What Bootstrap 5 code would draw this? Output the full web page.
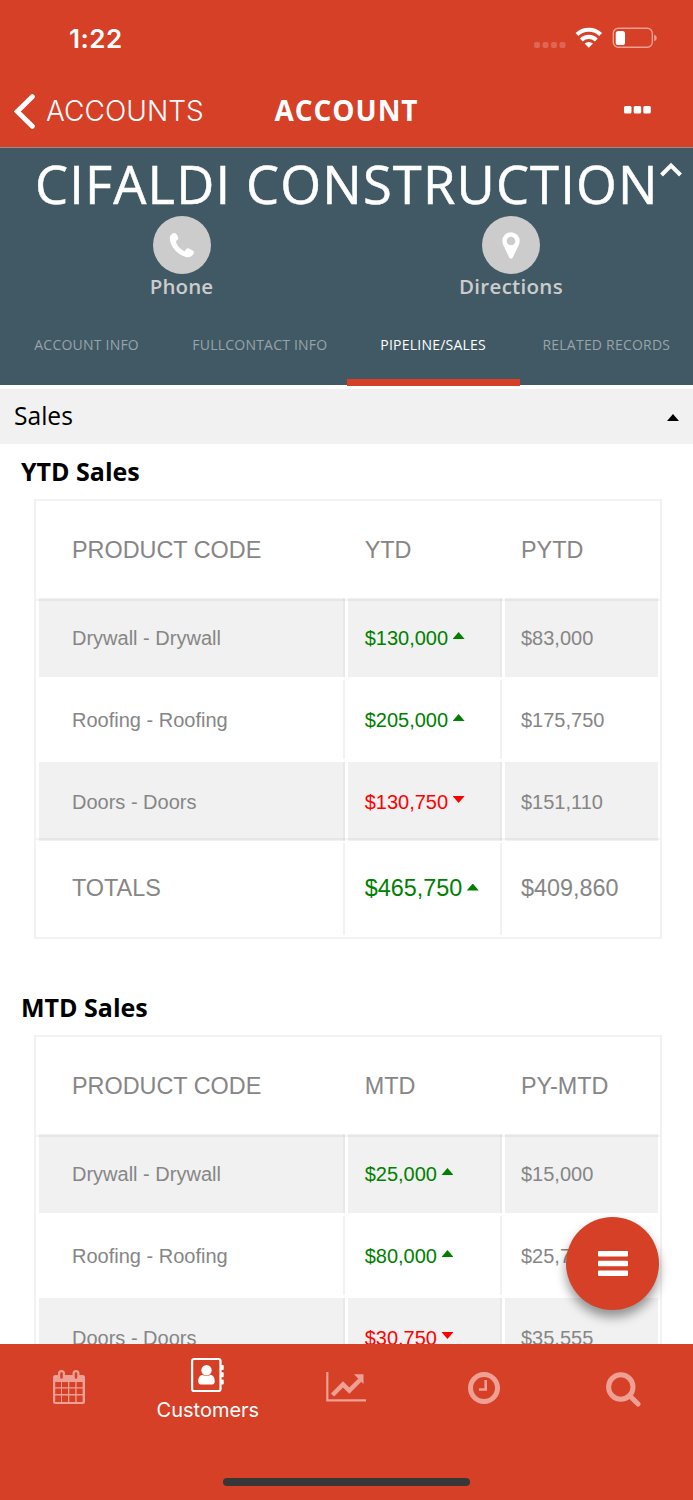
<!DOCTYPE html>
<html lang="en">
<head>
<meta charset="utf-8">
<meta name="viewport" content="width=device-width, initial-scale=1">
<title>Account</title>
<link href="https://cdn.jsdelivr.net/npm/bootstrap@5.3.0/dist/css/bootstrap.min.css" rel="stylesheet">
<style>
:root { --brand: #d64027; --slate: #415964; }
html, body { height: 1500px; overflow: hidden; }
body { font-family: "Open Sans", "Noto Sans", sans-serif; color: #000; background: #fff; line-height: 1; white-space: nowrap; }
svg { display: block; flex: none; }
.phone { height: 1500px; }
.topbar { background: var(--brand); height: 148px; border-bottom: 1px solid #a08a85; }
.status { height: 76px; padding: 0 36px 0 69px; }
.clock { font: 600 26px/30px Inter, sans-serif; letter-spacing: .5px; padding-top: 1px; }
.titlebar { height: 71px; display: grid; grid-template-columns: 252px 189px 252px; align-items: center; padding-bottom: 1px; }
.back { font: 300 28px/32px Inter, sans-serif; letter-spacing: .05px; padding-left: 14px; gap: 11px; }
.page-title { font-size: 28px; font-weight: 700; letter-spacing: .95px; padding-bottom: 3px; }
.hero { background: var(--slate); height: 237px; }
.company { font-size: 52.5px; line-height: 60px; padding: 6px 0 0 35px; height: 68px; letter-spacing: 1.15px; -webkit-text-stroke: .5px #fff; }
.caret-up { margin: 8px 0 0 1px; }
.quick { grid-template-columns: 363px 330px; }
.quick > div:last-child { padding-right: 34px; }
.round { width: 58px; height: 58px; background: #ccc; }
.quick-label { color: #ccc; font-size: 20.5px; font-weight: 600; line-height: 24px; letter-spacing: .1px; }
.quick > div:last-child .quick-label { letter-spacing: .3px; }
.tabs { height: 80px; }
.tabs a { width: 25%; color: #97a4aa; font-size: 14px; letter-spacing: .22px; padding-top: 4px; text-decoration: none; border-bottom: 7px solid transparent; }
.tabs a.current { color: #fff; border-color: var(--brand); }
.section-bar { margin-top: 4px; height: 55px; background: #f1f1f1; padding: 0 14px; font-size: 24.600px; }
.section-bar .tri { margin-top: 2px; }
.block-title { font-size: 25px; font-weight: 700; line-height: 30px; padding-left: 21px; height: 55px; padding-top: 12px; }
.sheet { margin: 0 31px 41px 34px; height: 440px; border: 2px solid #f2f2f2; font-family: "Liberation Sans", Arial, sans-serif; color: #868686; }
.sheet-row { display: grid; grid-template-columns: 306px 154px 153px; column-gap: 3px; padding-left: 3px; }
.sheet-row > div { display: flex; align-items: center; padding-left: 16px; border-right: 2px solid rgba(0,0,0,.05); }
.sheet-row > div:nth-child(2) { padding-left: 16.700px; }
.sheet-row > div:first-child { padding-left: 33px; }
.sheet-row > div:last-child { border-right: 0; }
.head-row { height: 100px; border-bottom: 2px solid rgba(0,0,0,.045); font-size: 23.4px; }
.sheet-row.head-row > div { border: 0; padding-top: 2px; }
.rows { display: grid; row-gap: 3px; margin-top: -3px; grid-auto-rows: 79px; font-size: 20px; }
.rows .sheet-row:nth-child(odd) > div { background: rgba(0,0,0,.055); background-clip: padding-box; border-color: rgba(0,0,0,.09); }
.total-row { margin-top: -3px; height: 99px; padding-top: 3px; padding-bottom: 2px; border-top: 2px solid rgba(0,0,0,.045); font-size: 23.4px; }
.gain { color: #008000; }
.loss { color: #f00; }
.tri { width: 12px; height: 7px; margin: -4px 0 0 4.500px; background: currentColor; clip-path: polygon(50% 0, 100% 100%, 0 100%); }
.loss .tri { clip-path: polygon(0 0, 100% 0, 50% 100%); }
.fab { left: 566px; top: 1217px; width: 93px; height: 93px; background: var(--brand); box-shadow: 0 7px 11px rgba(0,0,0,.4); }
.tabbar { background: var(--brand); height: 156px; }
.dock { height: 90px; display: grid; grid-template-columns: repeat(5, 138.6px); justify-items: center; }
.dock a { color: #eea095; text-decoration: none; }
.dock a.current { color: #fff; font: 400 20px/24px Inter, sans-serif; letter-spacing: 0; }
.home { width: 247px; height: 8px; background: #373737; margin-top: 44px; }
</style>
</head>
<body>
<div class="phone d-flex flex-column position-relative">
  <header class="topbar text-white flex-shrink-0">
    <div class="status d-flex align-items-center justify-content-between">
      <span class="clock">1:22</span>
      <svg width="124" height="26" viewBox="533 25 124 26" fill="#fff">
        <g opacity=".2"><rect x="534" y="42" width="6" height="6" rx="2"/><rect x="542.500" y="42" width="6" height="6" rx="2"/><rect x="551" y="42" width="6" height="6" rx="2"/><rect x="559.500" y="42" width="6" height="6" rx="2"/></g>
        <g fill="none" stroke="#fff" stroke-width="4.200"><path d="M577 34.500a17 17 0 0 1 23.600 0"/><path d="M581.300 39.900a10.800 10.800 0 0 1 15 0"/></g>
        <path d="M588.800 47.800l-4.200-4.200a6 6 0 0 1 8.400 0z"/>
        <g opacity=".5"><rect x="613.300" y="28.300" width="39" height="19" rx="5" fill="none" stroke="#fff" stroke-width="1.400"/><path d="M654.200 34.500q2.600 1.200 2.600 3.400t-2.600 3.400z"/></g>
        <rect x="615.700" y="31" width="9.300" height="14" rx="2.600"/>
      </svg>
    </div>
    <div class="titlebar">
      <div class="back d-flex align-items-center">
        <svg width="21" height="35" viewBox="0 0 21 35" fill="none" stroke="#fff" stroke-width="4.900" stroke-linecap="round"><path d="M18.300 2.700L3.300 17.500l15 14.800"/></svg>
        <span>ACCOUNTS</span>
      </div>
      <div class="page-title text-center">ACCOUNT</div>
      <svg class="ms-auto" width="27" height="8" viewBox="0 0 27 8" fill="#fff" style="margin:-2px 42px 0 0"><rect width="7.500" height="7.500" rx="1.500"/><rect x="9.700" width="7.500" height="7.500" rx="1.500"/><rect x="19.300" width="7.500" height="7.500" rx="1.500"/></svg>
    </div>
  </header>

  <section class="hero flex-shrink-0">
    <div class="company text-white d-flex"><span>CIFALDI CONSTRUCTION</span>
      <svg class="caret-up" width="22" height="15" viewBox="0 0 22 15" fill="none" stroke="#fff" stroke-width="4"><path d="M1.500 13L11 3.500l9.500 9.500"/></svg>
    </div>
    <div class="quick d-grid">
      <div class="d-flex flex-column align-items-center">
        <div class="round rounded-circle d-flex align-items-center justify-content-center">
          <svg width="26" height="26" viewBox="0 0 26 26" fill="#fff"><path d="M3 1.700Q5 .3 6.500 1.300C8.300 3 9 5 9.400 6.500Q9 7.700 6.800 9.200C7.800 13.500 11.500 17.500 15.800 19.300Q17 17 18.200 16.300C20.500 16.600 22.500 17.500 24.300 19Q25.200 20 24.600 21.500C23 24.500 20.500 25.600 17 25C9 23 1.500 15 .8 7Q.7 3.500 3 1.700z"/></svg>
        </div>
        <div class="quick-label">Phone</div>
      </div>
      <div class="d-flex flex-column align-items-center">
        <div class="round rounded-circle d-flex align-items-center justify-content-center">
          <svg width="18" height="27" viewBox="0 0 18 27" fill="#fff"><path fill-rule="evenodd" d="M9 .3a8.700 8.700 0 0 1 8.700 8.700c0 1.500-.3 2.700-.9 3.900l-6 12.600a2 2 0 0 1-3.600 0L1.200 12.900C.6 11.700.3 10.500.3 9A8.700 8.700 0 0 1 9 .3zM9 4.700a4.300 4.300 0 1 0 0 8.600 4.300 4.300 0 0 0 0-8.600z"/></svg>
        </div>
        <div class="quick-label">Directions</div>
      </div>
    </div>
    <nav class="tabs d-flex mt-2">
      <a href="#" class="d-flex align-items-center justify-content-center">ACCOUNT INFO</a>
      <a href="#" class="d-flex align-items-center justify-content-center">FULLCONTACT INFO</a>
      <a href="#" class="current d-flex align-items-center justify-content-center">PIPELINE/SALES</a>
      <a href="#" class="d-flex align-items-center justify-content-center">RELATED RECORDS</a>
    </nav>
  </section>

  <main class="flex-grow-1 overflow-hidden">
    <div class="section-bar d-flex align-items-center justify-content-between"><span>Sales</span><i class="tri"></i></div>

    <h2 class="block-title m-0">YTD Sales</h2>
    <div class="sheet">
      <div class="sheet-row head-row"><div>PRODUCT CODE</div><div>YTD</div><div>PYTD</div></div>
      <div class="rows">
        <div class="sheet-row"><div>Drywall - Drywall</div><div class="gain">$130,000<i class="tri"></i></div><div>$83,000</div></div>
        <div class="sheet-row"><div>Roofing - Roofing</div><div class="gain">$205,000<i class="tri"></i></div><div>$175,750</div></div>
        <div class="sheet-row"><div>Doors - Doors</div><div class="loss">$130,750<i class="tri"></i></div><div>$151,110</div></div>
      </div>
      <div class="sheet-row total-row"><div>TOTALS</div><div class="gain">$465,750<i class="tri"></i></div><div>$409,860</div></div>
    </div>

    <h2 class="block-title m-0">MTD Sales</h2>
    <div class="sheet">
      <div class="sheet-row head-row"><div>PRODUCT CODE</div><div>MTD</div><div>PY-MTD</div></div>
      <div class="rows">
        <div class="sheet-row"><div>Drywall - Drywall</div><div class="gain">$25,000<i class="tri"></i></div><div>$15,000</div></div>
        <div class="sheet-row"><div>Roofing - Roofing</div><div class="gain">$80,000<i class="tri"></i></div><div>$25,750</div></div>
        <div class="sheet-row"><div>Doors - Doors</div><div class="loss">$30,750<i class="tri"></i></div><div>$35,555</div></div>
      </div>
    </div>
  </main>

  <button class="fab border-0 p-0 rounded-circle position-absolute d-flex align-items-center justify-content-center" aria-label="Menu">
    <svg width="30" height="25" viewBox="0 0 30 25" fill="#fff"><rect width="30" height="5.500" rx="1"/><rect y="9.700" width="30" height="5.500" rx="1"/><rect y="19.400" width="30" height="5.500" rx="1"/></svg>
  </button>

  <footer class="tabbar flex-shrink-0">
    <nav class="dock">
      <a href="#" aria-label="Calendar" style="padding-top:26px">
        <svg width="32" height="35" viewBox="0 0 32 35"><path fill="currentColor" fill-rule="evenodd" d="M2.500 5H5V3.500a3.500 3.500 0 0 1 7 0V5h7.500V3.500a3.500 3.500 0 0 1 7 0V5h3A2.500 2.500 0 0 1 32 7.500v24a2.500 2.500 0 0 1-2.500 2.500h-27A2.500 2.500 0 0 1 0 31.500v-24A2.500 2.500 0 0 1 2.500 5zM7.200 3.500v4q0 1.200 1.300 1.200t1.300-1.200v-4q0-1.300-1.300-1.300T7.200 3.500zM21.700 3.500v4q0 1.200 1.300 1.200t1.300-1.200v-4q0-1.300-1.300-1.300t-1.300 1.300zM2.200 12v5.300H8V12zM9 12v5.300h6V12zM16.300 12v5.300h6V12zM23.600 12v5.300h6V12zM2.200 18.600v5.300H8v-5.300zM9 18.600v5.300h6v-5.300zM16.300 18.600v5.300h6v-5.300zM23.600 18.600v5.300h6v-5.300zM2.200 25.400V32H8v-6.600zM9 25.400V32h6v-6.600zM16.300 25.400V32h6v-6.600zM23.600 25.400V32h6v-6.600z"/></svg>
      </a>
      <a href="#" class="current d-flex flex-column align-items-center" style="padding-top:13px">
        <svg width="33" height="36" viewBox="0 0 33 36"><rect x="1.100" y="2" width="28.400" height="32" rx="2" fill="none" stroke="currentColor" stroke-width="2.200"/><g fill="currentColor"><circle cx="15.500" cy="13.300" r="5.200"/><path d="M11.300 17.800q4.200 2.400 8.400 0c3.200.8 4.200 4 4 7.200q-.2 2.500-2.500 2.500H9.800q-2.300 0-2.500-2.500c-.2-3.200.8-6.400 4-7.200z"/><rect x="30" y="8" width="2.700" height="5" rx=".8"/><rect x="30" y="15.300" width="2.700" height="5" rx=".8"/><rect x="30" y="22.600" width="2.700" height="5" rx=".8"/></g></svg>
        <span style="margin-top:5px">Customers</span>
      </a>
      <a href="#" aria-label="Reports" style="padding-top:27px">
        <svg width="40" height="32" viewBox="0 0 40 32"><path d="M1.300 1v28.400H40" fill="none" stroke="currentColor" stroke-width="2.200"/><path d="M6.500 24L17 13.500l6.300 6.200L34 9" fill="none" stroke="currentColor" stroke-width="4.500"/><path fill="currentColor" d="M28 3.300h9.500V13z"/></svg>
      </a>
      <a href="#" aria-label="Recent" style="padding:28px 2px 0 0">
        <svg width="32" height="32" viewBox="0 0 32 32" fill="none" stroke="currentColor"><circle cx="16" cy="16" r="13.500" stroke-width="5"/><path d="M17.700 8v9.500H11" stroke-width="2.600"/></svg>
      </a>
      <a href="#" aria-label="Search" style="padding-top:28px">
        <svg width="35" height="35" viewBox="0 0 35 35" fill="none" stroke="currentColor" stroke-width="5"><circle cx="14.800" cy="15" r="12.200"/><path d="M24 24l8 8" stroke-linecap="round"/></svg>
      </a>
    </nav>
    <div class="home rounded-pill mx-auto"></div>
  </footer>
</div>
<script src="https://cdn.jsdelivr.net/npm/bootstrap@5.3.0/dist/js/bootstrap.bundle.min.js"></script>
</body>
</html>
